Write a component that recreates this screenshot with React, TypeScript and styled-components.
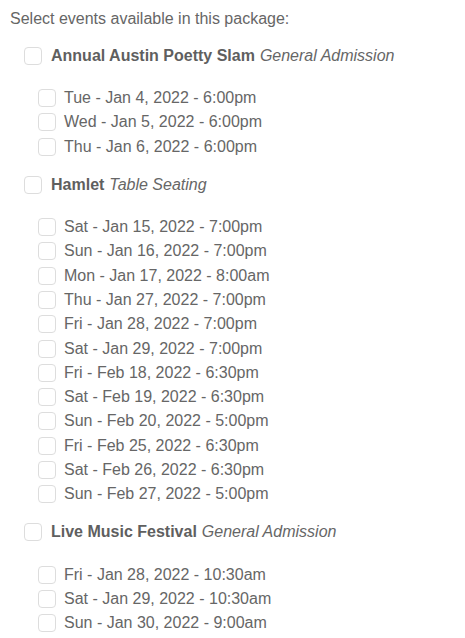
import React from "react";
import styled, { createGlobalStyle } from "styled-components";

const GlobalStyle = createGlobalStyle`
  body {
    margin: 0;
    background: #ffffff;
    font-family: "Liberation Sans", Arial, sans-serif;
  }
`;

const Wrapper = styled.div`
  padding: 9px 10px;
  color: #666666;
  font-size: 16px;
`;

const Title = styled.div`
  line-height: 20px;
`;

const GroupList = styled.div`
  display: flex;
  flex-direction: column;
  gap: 14px;
  margin-top: 15px;
`;

const Group = styled.div`
  display: flex;
  flex-direction: column;
`;

const Row = styled.label<{ $child?: boolean }>`
  display: flex;
  align-items: center;
  gap: ${(p) => (p.$child ? 8 : 9)}px;
  height: ${(p) => (p.$child ? "24.3px" : "24px")};
  padding-left: ${(p) => (p.$child ? 28 : 14)}px;
  cursor: pointer;
`;

const Children = styled.div`
  display: flex;
  flex-direction: column;
  margin-top: 18px;
`;

const Box = styled.input.attrs({ type: "checkbox" })`
  appearance: none;
  margin: 0;
  width: 18px;
  height: 18px;
  flex: none;
  border: 1px solid #dddddd;
  border-radius: 4px;
  background: #ffffff;
  box-sizing: border-box;
`;

const Name = styled.span`
  font-weight: bold;
  color: #5f5f5f;
  margin-right: 5px;
`;

const Seating = styled.span`
  font-style: italic;
`;

const groups = [
  {
    name: "Annual Austin Poetty Slam",
    seating: "General Admission",
    dates: [
      "Tue - Jan 4, 2022 - 6:00pm",
      "Wed - Jan 5, 2022 - 6:00pm",
      "Thu - Jan 6, 2022 - 6:00pm",
    ],
  },
  {
    name: "Hamlet",
    seating: "Table Seating",
    dates: [
      "Sat - Jan 15, 2022 - 7:00pm",
      "Sun - Jan 16, 2022 - 7:00pm",
      "Mon - Jan 17, 2022 - 8:00am",
      "Thu - Jan 27, 2022 - 7:00pm",
      "Fri - Jan 28, 2022 - 7:00pm",
      "Sat - Jan 29, 2022 - 7:00pm",
      "Fri - Feb 18, 2022 - 6:30pm",
      "Sat - Feb 19, 2022 - 6:30pm",
      "Sun - Feb 20, 2022 - 5:00pm",
      "Fri - Feb 25, 2022 - 6:30pm",
      "Sat - Feb 26, 2022 - 6:30pm",
      "Sun - Feb 27, 2022 - 5:00pm",
    ],
  },
  {
    name: "Live Music Festival",
    seating: "General Admission",
    dates: [
      "Fri - Jan 28, 2022 - 10:30am",
      "Sat - Jan 29, 2022 - 10:30am",
      "Sun - Jan 30, 2022 - 9:00am",
    ],
  },
];

const App = () => {
  return (
    <Wrapper>
      <GlobalStyle />
      <Title>Select events available in this package:</Title>
      <GroupList>
        {groups.map((g) => (
          <Group key={g.name}>
            <Row>
              <Box />
              <span>
                <Name>{g.name}</Name>
                <Seating>{g.seating}</Seating>
              </span>
            </Row>
            <Children>
              {g.dates.map((d) => (
                <Row $child key={d}>
                  <Box />
                  <span>{d}</span>
                </Row>
              ))}
            </Children>
          </Group>
        ))}
      </GroupList>
    </Wrapper>
  );
};

export default App;
